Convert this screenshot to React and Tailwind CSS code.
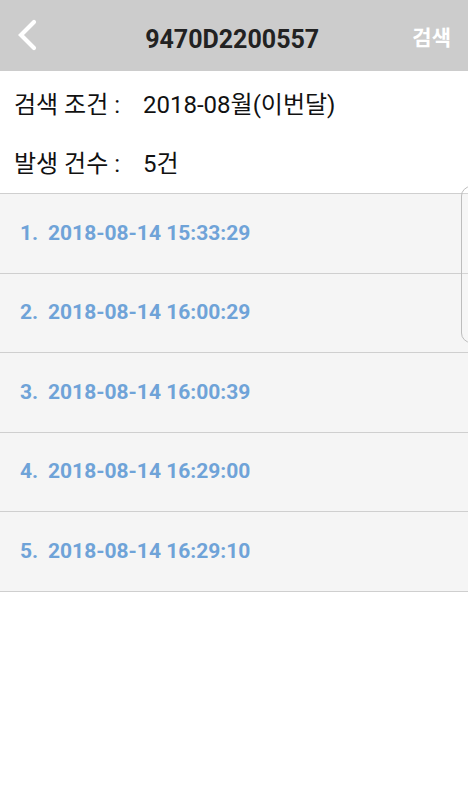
import React from 'react';

const items = [
  '2018-08-14 15:33:29',
  '2018-08-14 16:00:29',
  '2018-08-14 16:00:39',
  '2018-08-14 16:29:00',
  '2018-08-14 16:29:10',
];

function App() {
  return (
    <div className="relative min-h-[800px] bg-white font-['Roboto','Noto_Sans_CJK_KR',sans-serif]">
      <div className="flex h-[71px] items-center justify-between bg-[#cccccc] pl-[16px] pr-[17px] pt-[8px]">
        <svg width="24" height="32" viewBox="0 0 24 32" className="-mt-[10px]">
          <path d="M18 3 L5 16 L18 29" fill="none" stroke="#ffffff" strokeWidth="4.2" strokeLinecap="round" strokeLinejoin="miter" />
        </svg>
        <div className="ml-[12px] text-[25px] font-bold text-[#222222]">9470D2200557</div>
        <div className="-mt-[2px] text-[21px] font-bold text-white">검색</div>
      </div>

      <div className="px-[14px] text-[24px] text-[#111111]">
        <div className="flex h-[64px] items-center pt-[3px]">
          <span className="w-[129px]">검색 조건 :</span>
          <span>2018-08월(이번달)</span>
        </div>
        <div className="flex h-[58px] items-center">
          <span className="w-[129px]">발생 건수 :</span>
          <span>5건</span>
        </div>
      </div>

      <div className="border-t border-[#cfcfcf]">
        {items.map((t, i) => (
          <div key={i} className="flex h-[79.5px] items-center border-b border-[#cfcfcf] bg-[#f5f5f5] pl-5 text-[21px] font-bold text-[#6fa3d8]">
            <span className="w-[28px]">{i + 1}.</span>
            <span>{t}</span>
          </div>
        ))}
      </div>

      <div className="absolute left-[461px] top-[186px] h-[157px] w-[20px] rounded-l-[10px] border border-[#bdbdbd] bg-white/10" />
    </div>
  );
}

export default App;
